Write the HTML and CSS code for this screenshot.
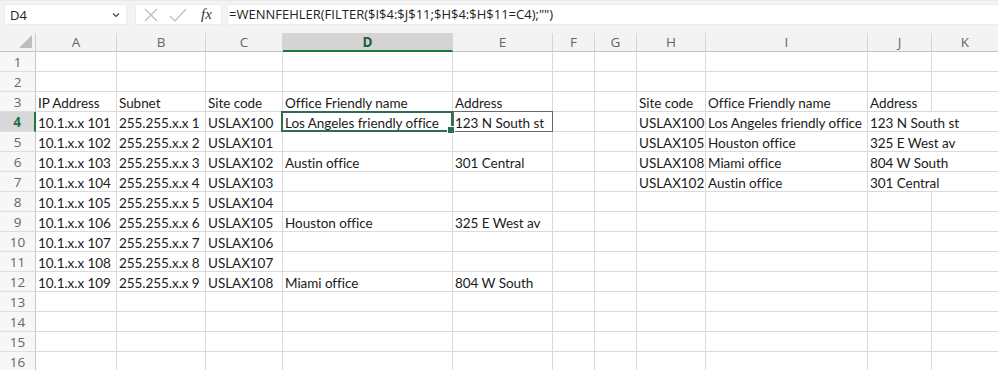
FILE: index.html
```html
<!DOCTYPE html>
<html>
<head>
<meta charset="utf-8">
<link rel="stylesheet" href="styles.css">
</head>
<body>
<div class="toolbar">
  <div class="namebox"><span>D4</span>
    <svg class="chev" width="8" height="6" viewBox="0 0 8 6"><polyline points="1,1.5 4,4.5 7,1.5" fill="none" stroke="#444" stroke-width="1.2"/></svg>
  </div>
  <div class="iconbox">
    <svg width="16" height="16" viewBox="0 0 16 16"><path d="M2 2 L14 14 M14 2 L2 14" stroke="#bcbcbc" stroke-width="1.2" fill="none"/></svg>
    <svg width="18" height="16" viewBox="0 0 18 16"><polyline points="1,9 6,14 17,2" stroke="#bcbcbc" stroke-width="1.2" fill="none"/></svg>
    <span class="fx">fx</span>
  </div>
  <div class="formula">=WENNFEHLER(FILTER($I$4:$J$11;$H$4:$H$11=C4);"")</div>
</div>
<div class="sheet">
  <div class="corner"></div><div class="ch">A</div><div class="ch">B</div><div class="ch">C</div><div class="ch sel">D</div><div class="ch">E</div><div class="ch">F</div><div class="ch">G</div><div class="ch">H</div><div class="ch">I</div><div class="ch">J</div><div class="ch">K</div>

  <div class="rh">1</div><div class="c"></div><div class="c"></div><div class="c"></div><div class="c"></div><div class="c"></div><div class="c"></div><div class="c"></div><div class="c"></div><div class="c"></div><div class="c"></div><div class="c"></div>
  <div class="rh">2</div><div class="c"></div><div class="c"></div><div class="c"></div><div class="c"></div><div class="c"></div><div class="c"></div><div class="c"></div><div class="c"></div><div class="c"></div><div class="c"></div><div class="c"></div>
  <div class="rh">3</div><div class="c">IP Address</div><div class="c">Subnet</div><div class="c">Site code</div><div class="c">Office Friendly name</div><div class="c">Address</div><div class="c"></div><div class="c"></div><div class="c">Site code</div><div class="c">Office Friendly name</div><div class="c">Address</div><div class="c"></div>
  <div class="rh sel">4</div><div class="c">10.1.x.x 101</div><div class="c">255.255.x.x 1</div><div class="c">USLAX100</div><div class="c active">Los Angeles friendly office</div><div class="c boxed">123 N South st</div><div class="c"></div><div class="c"></div><div class="c">USLAX100</div><div class="c">Los Angeles friendly office</div><div class="c spill">123 N South st</div><div class="c"></div>
  <div class="rh">5</div><div class="c">10.1.x.x 102</div><div class="c">255.255.x.x 2</div><div class="c">USLAX101</div><div class="c"></div><div class="c"></div><div class="c"></div><div class="c"></div><div class="c">USLAX105</div><div class="c">Houston office</div><div class="c spill">325 E West av</div><div class="c"></div>
  <div class="rh">6</div><div class="c">10.1.x.x 103</div><div class="c">255.255.x.x 3</div><div class="c">USLAX102</div><div class="c">Austin office</div><div class="c">301 Central</div><div class="c"></div><div class="c"></div><div class="c">USLAX108</div><div class="c">Miami office</div><div class="c spill">804 W South</div><div class="c"></div>
  <div class="rh">7</div><div class="c">10.1.x.x 104</div><div class="c">255.255.x.x 4</div><div class="c">USLAX103</div><div class="c"></div><div class="c"></div><div class="c"></div><div class="c"></div><div class="c">USLAX102</div><div class="c">Austin office</div><div class="c spill">301 Central</div><div class="c"></div>
  <div class="rh">8</div><div class="c">10.1.x.x 105</div><div class="c">255.255.x.x 5</div><div class="c">USLAX104</div><div class="c"></div><div class="c"></div><div class="c"></div><div class="c"></div><div class="c"></div><div class="c"></div><div class="c"></div><div class="c"></div>
  <div class="rh">9</div><div class="c">10.1.x.x 106</div><div class="c">255.255.x.x 6</div><div class="c">USLAX105</div><div class="c">Houston office</div><div class="c">325 E West av</div><div class="c"></div><div class="c"></div><div class="c"></div><div class="c"></div><div class="c"></div><div class="c"></div>
  <div class="rh">10</div><div class="c">10.1.x.x 107</div><div class="c">255.255.x.x 7</div><div class="c">USLAX106</div><div class="c"></div><div class="c"></div><div class="c"></div><div class="c"></div><div class="c"></div><div class="c"></div><div class="c"></div><div class="c"></div>
  <div class="rh">11</div><div class="c">10.1.x.x 108</div><div class="c">255.255.x.x 8</div><div class="c">USLAX107</div><div class="c"></div><div class="c"></div><div class="c"></div><div class="c"></div><div class="c"></div><div class="c"></div><div class="c"></div><div class="c"></div>
  <div class="rh">12</div><div class="c">10.1.x.x 109</div><div class="c">255.255.x.x 9</div><div class="c">USLAX108</div><div class="c">Miami office</div><div class="c">804 W South</div><div class="c"></div><div class="c"></div><div class="c"></div><div class="c"></div><div class="c"></div><div class="c"></div>
  <div class="rh">13</div><div class="c"></div><div class="c"></div><div class="c"></div><div class="c"></div><div class="c"></div><div class="c"></div><div class="c"></div><div class="c"></div><div class="c"></div><div class="c"></div><div class="c"></div>
  <div class="rh">14</div><div class="c"></div><div class="c"></div><div class="c"></div><div class="c"></div><div class="c"></div><div class="c"></div><div class="c"></div><div class="c"></div><div class="c"></div><div class="c"></div><div class="c"></div>
  <div class="rh">15</div><div class="c"></div><div class="c"></div><div class="c"></div><div class="c"></div><div class="c"></div><div class="c"></div><div class="c"></div><div class="c"></div><div class="c"></div><div class="c"></div><div class="c"></div>
  <div class="rh">16</div><div class="c"></div><div class="c"></div><div class="c"></div><div class="c"></div><div class="c"></div><div class="c"></div><div class="c"></div><div class="c"></div><div class="c"></div><div class="c"></div><div class="c"></div>
</div>
</body>
</html>
```
FILE: styles.css
```css
* { box-sizing: border-box; }
html, body { margin: 0; padding: 0; background: #fff; overflow: hidden; }
body { width: 998px; height: 370px; font-family: "Open Sans", "Noto Sans", sans-serif; }

.toolbar {
  height: 33px;
  background: #f3f3f3;
  display: flex;
  align-items: flex-start;
  padding: 3px 0 0 4px;
  border-top: 1px solid #e8e8e8;
}
.namebox {
  width: 123px; height: 21px;
  background: #fff;
  border: 1px solid #ececec;
  display: flex; align-items: center; justify-content: space-between;
  padding: 0 6px 0 5px;
  font-size: 13px; color: #222;
}
.iconbox {
  margin-left: 8px;
  width: 87px; height: 21px;
  background: #fff;
  border: 1px solid #ececec;
  display: flex; align-items: center;
  padding-left: 7px; gap: 10px;
}
.fx {
  font-family: "Liberation Serif", serif;
  font-style: italic;
  font-size: 15px;
  color: #333;
  margin-left: 4px;
}
.formula {
  margin-left: 5px;
  flex: 1; height: 21px;
  background: #fff;
  border: 1px solid #ececec;
  border-right: none;
  font-size: 13px; color: #222;
  line-height: 19px;
  padding-left: 1px;
  white-space: nowrap;
}

.sheet {
  display: grid;
  grid-template-columns: 36px 81px 89px 77px 170px 100px 42px 42px 69px 162px 64px 67px;
  grid-template-rows: 19px;
  grid-auto-rows: 20px;
  width: 999px;
}
.corner {
  background: #f3f3f3;
  border-right: 1px solid #d0d0d0;
  border-bottom: 1px solid #c4c4c4;
  position: relative;
}
.corner::after {
  content: "";
  position: absolute;
  right: 3px; bottom: 3px;
  border-style: solid;
  border-width: 0 0 13px 13px;
  border-color: transparent transparent #bdbdbd transparent;
}
.ch {
  background: #f3f3f3;
  border-right: 1px solid #d6d6d6;
  border-bottom: 1px solid #c4c4c4;
  text-align: center;
  font-size: 13.5px;
  color: #666;
  line-height: 18px;
}
.ch.sel {
  background: #d4d4d4;
  border-bottom: 2px solid #217346;
  color: #1f5c3a;
  font-weight: 700;
}
.rh {
  background: #f7f7f7;
  border-right: 1px solid #c8c8c8;
  border-bottom: 1px solid #dedede;
  text-align: center;
  font-size: 13.5px;
  color: #666;
  line-height: 20px;
}
.rh.sel {
  background: #d8d8d8;
  border-right: 2px solid #217346;
  color: #217346;
  font-weight: 700;
}
.c {
  border-right: 1px solid #dadada;
  border-bottom: 1px solid #dadada;
  font-family: "Lato", "Carlito", sans-serif;
  font-size: 13.5px;
  letter-spacing: -0.05px;
  color: #1b1b1b;
  padding: 2px 0 0 2px;
  line-height: 18px;
  white-space: nowrap;
  position: relative;
}
.c.spill { border-right-color: transparent; overflow: visible; z-index: 1; }
.c.active::before {
  content: "";
  position: absolute;
  top: -1px; left: -2px; right: -1px; bottom: -1px;
  border: 2px solid #2f6e4d;
  z-index: 3;
}
.c.active::after {
  content: "";
  position: absolute;
  width: 6px; height: 6px;
  right: -3px; bottom: -3px;
  background: #2f6e4d;
  border: 1px solid #fff;
  z-index: 4;
}
.c.boxed::before {
  content: "";
  position: absolute;
  top: -1px; left: 0; right: -1px; bottom: -1px;
  border: 1px solid #5f6f66;
  z-index: 2;
}
```
